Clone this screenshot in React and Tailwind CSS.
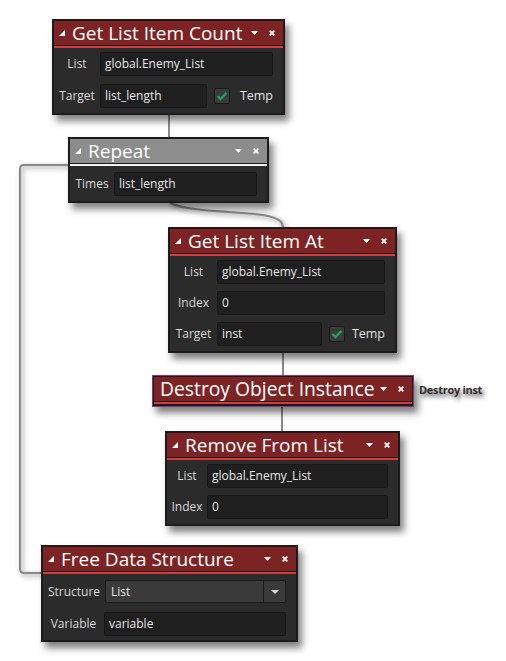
import React from "react";

function Tri() {
    return (
        <svg width="6" height="6" viewBox="0 0 6 6" className="shrink-0">
            <polygon points="6,0 6,6 0,6" fill="#ffffff" />
        </svg>
    );
}

function HeaderIcons() {
    return (
        <div className="ml-auto shrink-0 flex items-center gap-[11px] pr-[8px]">
            <svg width="7" height="4" viewBox="0 0 7 4">
                <polygon points="0,0 7,0 3.5,4" fill="#ffffff" />
            </svg>
            <svg width="6" height="6" viewBox="0 0 6 6">
                <path d="M0.7 0.7 L5.3 5.3 M5.3 0.7 L0.7 5.3" stroke="#ffffff" strokeWidth="1.7" />
            </svg>
        </div>
    );
}

function Check() {
    return (
        <div className="w-[16px] h-[16px] shrink-0 rounded-[2px] bg-[#3b3b3b] border border-[#1a1a1a] flex items-center justify-center">
            <svg width="12" height="10" viewBox="0 0 12 10">
                <path d="M1.5 5 L4.5 8 L10.5 2" fill="none" stroke="#1fa65a" strokeWidth="2.4" />
            </svg>
        </div>
    );
}

function Field({ value, className = "flex-1" }) {
    return (
        <div className={`${className} h-[24px] bg-[#1f1f1f] border border-[#181818] rounded-[2px] pl-[4px] flex items-center text-[12px] text-[#e6e6e6]`}>
            {value}
        </div>
    );
}

function Row({ label, labelW, children }) {
    return (
        <div className="flex items-center">
            <div className={`${labelW} shrink-0 text-center text-[12px] text-[#d8d8d8]`}>{label}</div>
            {children}
        </div>
    );
}

function Node({ pos, title, gray, children, bodyClass }) {
    return (
        <div className={`absolute ${pos} bg-[#1b1b1b] border-2 border-[#1b1b1b] shadow-[4px_6px_7px_rgba(0,0,0,0.5)]`}>
            <div className={`h-[24px] flex items-center pl-[5px] ${gray ? "bg-[#8d8d8d]" : "bg-[#7e2323]"}`}>
                <Tri />
                <span className="ml-[7px] text-[19px] leading-none text-white whitespace-nowrap">{title}</span>
                <HeaderIcons />
            </div>
            <div className={`mt-[1px] h-[2px] ${gray ? "bg-[#f4f4f4]" : "bg-[#d83a3a]"}`} />
            <div className={`bg-[#2b2b2b] pr-[10px] flex flex-col ${bodyClass}`}>{children}</div>
        </div>
    );
}

function Wires() {
    const loop = "M68 165 H24 Q20 165 20 169 V569 Q20 573 24 573 H42";
    const curve = "M170 203 C190 213, 250 211, 268 216 C280 219, 283 222, 283 228";
    return (
        <svg className="absolute left-0 top-0" width="506" height="661" viewBox="0 0 506 661">
            <defs>
                <filter id="soft" x="-20%" y="-20%" width="140%" height="140%">
                    <feGaussianBlur stdDeviation="2" />
                </filter>
            </defs>
            <g fill="none" stroke="#cfcfcf" strokeWidth="5" filter="url(#soft)" transform="translate(2,2)">
                <path d={loop} />
                <path d={curve} />
            </g>
            <g fill="none" stroke="#8a8a8a" strokeWidth="2">
                <path d={loop} />
                <path d="M169 114 V138" />
                <path d={curve} />
                <path d="M283 351 V376" />
                <path d="M282 406 V432" />
            </g>
        </svg>
    );
}

export default function App() {
    return (
        <div className="relative w-[506px] h-[661px] bg-white overflow-hidden font-['Open_Sans','Noto_Sans',sans-serif]">
            <Wires />

            {/* Get List Item Count */}
            <Node pos="left-[52px] top-[19px] w-[233px]" title="Get List Item Count" bodyClass="pt-[4px] pb-[5px] gap-[8px]">
                <Row label="List" labelW="w-[46px]">
                    <Field value="global.Enemy_List" />
                </Row>
                <Row label="Target" labelW="w-[46px]">
                    <Field value="list_length" className="w-[113px]" />
                    <div className="ml-[7px]"><Check /></div>
                    <span className="ml-[10px] text-[12.5px] text-[#e0e0e0]">Temp</span>
                </Row>
            </Node>

            {/* Repeat */}
            <Node pos="left-[68px] top-[137px] w-[201px]" title="Repeat" gray bodyClass="pt-[6px] pb-[5px]">
                <Row label="Times" labelW="w-[44px]">
                    <Field value="list_length" />
                </Row>
            </Node>

            {/* Get List Item At */}
            <Node pos="left-[168px] top-[227px] w-[229px]" title="Get List Item At" bodyClass="pt-[4px] pb-[5px] gap-[7px]">
                <Row label="List" labelW="w-[47px]">
                    <Field value="global.Enemy_List" />
                </Row>
                <Row label="Index" labelW="w-[47px]">
                    <Field value="0" />
                </Row>
                <Row label="Target" labelW="w-[47px]">
                    <Field value="inst" className="w-[109px]" />
                    <div className="ml-[7px]"><Check /></div>
                    <span className="ml-[7px] text-[12.5px] text-[#e0e0e0]">Temp</span>
                </Row>
            </Node>

            {/* Destroy Object Instance */}
            <div className="absolute left-[152px] top-[375px] w-[262px] border border-[#7b3c80] shadow-[4px_6px_7px_rgba(0,0,0,0.5)]">
                <div className="bg-[#1b1b1b] border border-[#1b1b1b] pb-[1px]">
                    <div className="h-[24px] flex items-center bg-[#7e2323] pl-[6px]">
                        <span className="text-[19.3px] leading-none text-white whitespace-nowrap">Destroy Object Instance</span>
                        <HeaderIcons />
                    </div>
                    <div className="mt-[1px] h-[2px] bg-[#d83a3a]" />
                </div>
            </div>
            <div className="absolute left-[419px] top-[382px] text-[11px] font-bold text-[#2e2e2e] tracking-[-0.3px] [text-shadow:2px_3px_4px_rgba(0,0,0,0.7)]">
                Destroy inst
            </div>

            {/* Remove From List */}
            <Node pos="left-[165px] top-[431px] w-[235px]" title="Remove From List" bodyClass="pt-[4px] pb-[5px] gap-[7px]">
                <Row label="List" labelW="w-[40px]">
                    <Field value="global.Enemy_List" />
                </Row>
                <Row label="Index" labelW="w-[40px]">
                    <Field value="0" />
                </Row>
            </Node>

            {/* Free Data Structure */}
            <Node pos="left-[41px] top-[545px] w-[257px]" title="Free Data Structure" bodyClass="pt-[6px] pb-[4px] gap-[9px]">
                <Row label="Structure" labelW="w-[62px]">
                    <div className="flex-1 h-[23px] flex bg-[#3a3a3a] border border-[#1c1c1c] rounded-[2px]">
                        <div className="flex-1 pl-[5px] flex items-center text-[12px] text-[#e6e6e6]">List</div>
                        <div className="w-[22px] border-l border-[#1c1c1c] flex items-center justify-center">
                            <svg width="8" height="4" viewBox="0 0 8 4">
                                <polygon points="0,0 8,0 4,4" fill="#d8d8d8" />
                            </svg>
                        </div>
                    </div>
                </Row>
                <Row label="Variable" labelW="w-[61px]">
                    <Field value="variable" />
                </Row>
            </Node>
        </div>
    );
}
